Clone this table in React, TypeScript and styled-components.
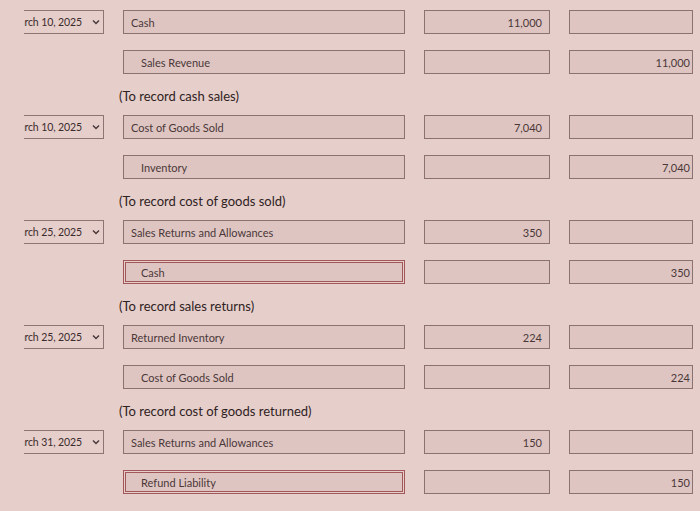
import * as React from 'react'
import styled, { createGlobalStyle } from 'styled-components'

const GlobalStyle = createGlobalStyle`
    html, body {
        margin: 0;
        padding: 0;
        background: #e6cecb;
    }
    body {
        font-family: Lato, 'Open Sans', sans-serif;
        color: #3b2c2c;
    }
`

interface Line {
    account: string
    debit?: string
    credit?: string
    focused?: boolean
}

interface Entry {
    date: string
    lines: Line[]
    note: string
}

const entries: Entry[] = [
    {
        date: 'March 10, 2025',
        lines: [
            { account: 'Cash', debit: '11,000' },
            { account: 'Sales Revenue', credit: '11,000' },
        ],
        note: '(To record cash sales)',
    },
    {
        date: 'March 10, 2025',
        lines: [
            { account: 'Cost of Goods Sold', debit: '7,040' },
            { account: 'Inventory', credit: '7,040' },
        ],
        note: '(To record cost of goods sold)',
    },
    {
        date: 'March 25, 2025',
        lines: [
            { account: 'Sales Returns and Allowances', debit: '350' },
            { account: 'Cash', credit: '350', focused: true },
        ],
        note: '(To record sales returns)',
    },
    {
        date: 'March 25, 2025',
        lines: [
            { account: 'Returned Inventory', debit: '224' },
            { account: 'Cost of Goods Sold', credit: '224' },
        ],
        note: '(To record cost of goods returned)',
    },
    {
        date: 'March 31, 2025',
        lines: [
            { account: 'Sales Returns and Allowances', debit: '150' },
            { account: 'Refund Liability', credit: '150', focused: true },
        ],
        note: '',
    },
]

const Page = styled.div`
    width: 700px;
    height: 511px;
    overflow: hidden;
    padding: 10px 0 0 24px;
    box-sizing: border-box;
`

const Group = styled.div`
    display: flex;
    flex-direction: column;
`

const Row = styled.div`
    display: grid;
    grid-template-columns: 80px 282px 126px 124px;
    column-gap: 19px;
    height: 24px;
    margin-bottom: 16px;
`

const DateSelect = styled.div`
    display: flex;
    align-items: center;
    justify-content: flex-end;
    overflow: hidden;
    border: 1px solid #8e7573;
    border-left: none;
    box-sizing: border-box;
    padding-right: 3px;
    font-size: 10.5px;
    letter-spacing: -0.1px;
    white-space: nowrap;
    gap: 10px;
`

const Spacer = styled.div``

const Field = styled.div<{ $indent?: boolean; $focused?: boolean; $right?: boolean }>`
    display: flex;
    align-items: center;
    justify-content: ${p => (p.$right ? 'flex-end' : 'flex-start')};
    box-sizing: border-box;
    background: #dfc5c2;
    border: 1px solid #8a7270;
    box-shadow: ${p => (p.$focused ? 'inset 0 0 0 1px #e6cecb, inset 0 0 0 2px #a2585a' : 'none')};
    border-color: ${p => (p.$focused ? '#a2585a' : '#8a7270')};
    padding: 0 ${p => (p.$right ? '7px' : '0')} 0 ${p => (p.$indent ? '17px' : '7px')};
    font-size: 11px;
    color: #4a3838;
    white-space: nowrap;
    overflow: hidden;
`

const Note = styled.div`
    height: 16px;
    line-height: 16px;
    margin: -2px 0 11px 95px;
    font-size: 13px;
    color: #2f2222;
`

const Chevron = () => (
    <svg width="8" height="6" viewBox="0 0 8 6" style={{ flexShrink: 0 }}>
        <path d="M1 1.5 L4 4.5 L7 1.5" fill="none" stroke="#4a3a3a" strokeWidth="1.5" />
    </svg>
)

export default function App() {
    return (
        <Page>
            <GlobalStyle />
            {entries.map((entry, i) => (
                <Group key={i}>
                    {entry.lines.map((line, j) => (
                        <Row key={j}>
                            {j === 0 ? (
                                <DateSelect>
                                    <span>{entry.date}</span>
                                    <Chevron />
                                </DateSelect>
                            ) : (
                                <Spacer />
                            )}
                            <Field $indent={j > 0} $focused={line.focused}>
                                {line.account}
                            </Field>
                            <Field $right>{line.debit}</Field>
                            <Field $right style={{ paddingRight: 2 }}>{line.credit}</Field>
                        </Row>
                    ))}
                    {entry.note && <Note>{entry.note}</Note>}
                </Group>
            ))}
        </Page>
    )
}
